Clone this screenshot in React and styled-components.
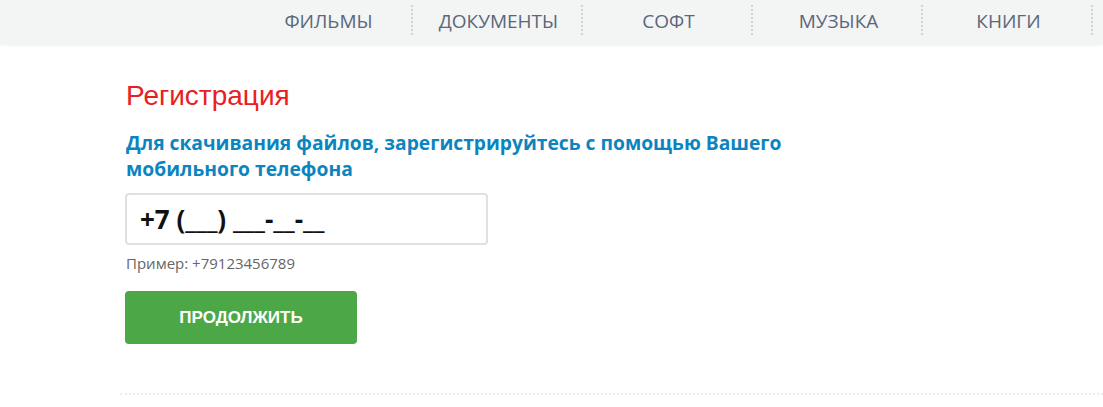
import styled, { createGlobalStyle } from "styled-components";

const GlobalStyle = createGlobalStyle`
  body {
    margin: 0;
    background: #fff;
    font-family: "Open Sans", Arial, sans-serif;
  }
`;

const items = ["ФИЛЬМЫ", "ДОКУМЕНТЫ", "СОФТ", "МУЗЫКА", "КНИГИ"];

const App = () => {
  return (
    <>
      <GlobalStyle />
      <Header>
        <Nav>
          {items.map((item) => (
            <NavItem key={item} href="#">
              {item}
            </NavItem>
          ))}
        </Nav>
      </Header>
      <Main>
        <Title>Регистрация</Title>
        <Lead>
          Для скачивания файлов, зарегистрируйтесь с помощью Вашего мобильного
          телефона
        </Lead>
        <PhoneInput defaultValue="+7 (___) ___-__-__" />
        <Hint>Пример: +79123456789</Hint>
        <Button>ПРОДОЛЖИТЬ</Button>
      </Main>
      <Divider />
    </>
  );
};

const Header = styled.header`
  height: 44px;
  background: #f3f4f4;
  box-shadow: 0 1px 3px rgba(0, 0, 0, 0.08);
  display: flex;
  justify-content: flex-end;
`;

const Nav = styled.nav`
  display: flex;
  padding-right: 12px;
`;

const NavItem = styled.a`
  position: relative;
  width: 170px;
  height: 42px;
  display: flex;
  align-items: center;
  justify-content: center;
  padding-left: 5px;
  box-sizing: border-box;
  font-size: 19px;
  color: #5a677a;
  text-decoration: none;
  &::after {
    content: "";
    position: absolute;
    right: -2px;
    top: 5px;
    height: 30px;
    border-right: 2px dotted #d2d4d4;
  }
`;

const Main = styled.main`
  padding: 36px 0 49px 126px;
  display: flex;
  flex-direction: column;
  align-items: flex-start;
`;

const Title = styled.h1`
  margin: 0;
  font-family: Arial, "Liberation Sans", sans-serif;
  font-weight: normal;
  font-size: 28px;
  line-height: 32px;
  color: #e8211f;
`;

const Lead = styled.p`
  margin: 18px 0 0;
  width: 700px;
  font-size: 19.25px;
  line-height: 26px;
  font-weight: 700;
  color: #0c84c0;
`;

const PhoneInput = styled.input`
  margin: 11px 0 0 -1px;
  width: 363px;
  height: 52px;
  box-sizing: border-box;
  border: 2px solid #e0e0e0;
  border-radius: 4px;
  padding: 0 13px;
  font-family: "Open Sans", Arial, sans-serif;
  font-size: 26px;
  font-weight: 700;
  color: #111;
  outline: none;
`;

const Hint = styled.div`
  margin-top: 9px;
  font-size: 15px;
  line-height: 18px;
  color: #666;
`;

const Button = styled.button`
  margin: 19px 0 0 -1px;
  width: 232px;
  height: 53px;
  border: none;
  border-radius: 4px;
  background: #4ca847;
  color: #fff;
  font-family: Arial, "Liberation Sans", sans-serif;
  font-weight: 700;
  font-size: 17px;
  cursor: pointer;
`;

const Divider = styled.hr`
  margin: 0 0 0 120px;
  border: none;
  border-top: 2px dotted #ececec;
`;

export default App;
